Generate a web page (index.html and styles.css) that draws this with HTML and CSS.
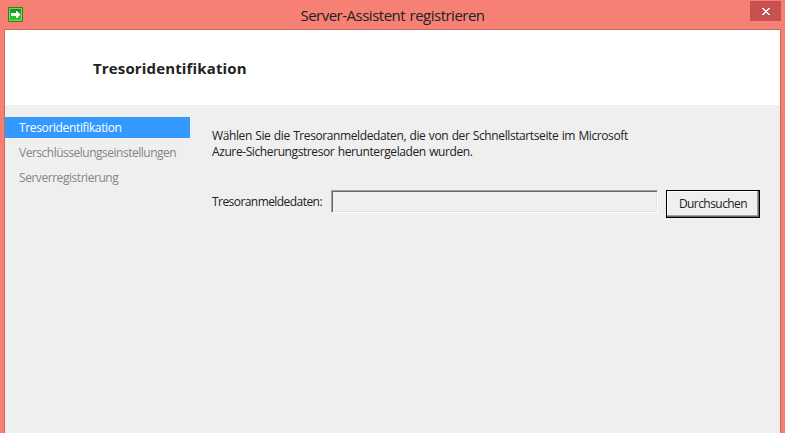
FILE: index.html
```
<!DOCTYPE html>
<html lang="de">
<head>
<meta charset="utf-8">
<title>Server-Assistent registrieren</title>
<link rel="stylesheet" href="styles.css">
</head>
<body>
<div class="window">
  <header class="titlebar">
    <svg class="app-icon" width="15" height="15" viewBox="0 0 15 15">
      <defs><linearGradient id="g" x1="0" y1="0" x2="0" y2="1"><stop offset="0" stop-color="#149014"/><stop offset="1" stop-color="#3fc832"/></linearGradient></defs>
      <rect width="15" height="15" rx="1" fill="#238a20"/>
      <rect x="1.5" y="1.5" width="12" height="12" fill="url(#g)" stroke="#7fd068"/>
      <path d="M3 6h5V4h1l3.5 3.5L9 11H8V9H3z" fill="#fff"/>
    </svg>
    <h1 class="title">Server-Assistent registrieren</h1>
    <button class="close" aria-label="Schließen">
      <svg width="8" height="7" viewBox="0 0 8 7"><path d="M0 0h2v1h1v1h2V1h1V0h2v1H7v1H6v1H5v1h1v1h1v1h1v1H6V6H5V5H3v1H2v1H0V6h1V5h1V4h1V3H2V2H1V1H0z" fill="#fff"/></svg>
    </button>
  </header>
  <div class="client">
    <div class="banner"><h2>Tresoridentifikation</h2></div>
    <div class="body">
      <nav class="steps">
        <div class="step active">Tresoridentifikation</div>
        <div class="step settings">Verschlüsselungseinstellungen</div>
        <div class="step">Serverregistrierung</div>
      </nav>
      <main class="content">
        <p class="intro">Wählen Sie die Tresoranmeldedaten, die von der Schnellstartseite im Microsoft<br>Azure-Sicherungstresor heruntergeladen wurden.</p>
        <div class="field">
          <label for="cred">Tresoranmeldedaten:</label>
          <input id="cred" type="text">
          <button class="browse">Durchsuchen</button>
        </div>
      </main>
    </div>
  </div>
</div>
</body>
</html>
```
FILE: styles.css
```
* { box-sizing: border-box; }
body { margin: 0; font: 12px/16px "Open Sans", "Noto Sans", sans-serif; color: #222; }
h1, h2, p { margin: 0; }
.window { width: 785px; height: 433px; background: #f58073; padding: 0 4px; overflow: hidden; display: flex; flex-direction: column; }
.titlebar { height: 29px; flex: none; display: flex; align-items: flex-start; }
.app-icon { margin: 7px 0 0 4px; flex: none; }
.title { flex: 1; margin-top: 5px; padding-left: 12px; text-align: center; font-size: 15px; line-height: 20px; font-weight: 400; letter-spacing: -0.5px; word-spacing: 1px; white-space: nowrap; }
.close { width: 31px; height: 20px; margin-top: 1px; border: 0; padding: 1px 0 0 1px; background: #c75050; display: flex; align-items: center; justify-content: center; }
.client { flex: 1; border: 1px solid #c9685f; border-bottom: 0; background: #efefef; }
.banner { height: 75px; background: #fff; padding: 28px 0 0 88px; }
.banner h2 { font-size: 15px; line-height: 20px; font-weight: 700; letter-spacing: 0.15px; }
.body { display: flex; }
.steps { width: 185px; flex: none; padding-top: 12px; display: flex; flex-direction: column; gap: 4px; }
.step { height: 21px; padding: 3px 0 0 14px; color: #858585; letter-spacing: -0.45px; white-space: nowrap; }
.step.active { background: #3399ff; color: #fff; letter-spacing: -0.36px; }
.step.settings { letter-spacing: -0.49px; }
.content { padding: 23px 0 0 22px; }
.intro { white-space: nowrap; letter-spacing: -0.4px; word-spacing: 0.7px; }
.field { display: flex; margin-top: 30px; }
.field label { width: 119px; padding-top: 4px; letter-spacing: -0.56px; white-space: nowrap; }
.field input { width: 327px; height: 23px; background: #efefef; border: 1px solid; border-color: #a0a0a0 #fff #fff #a0a0a0; box-shadow: inset 1px 1px #696969, inset -1px -1px #e3e3e3; border-radius: 0; outline: 0; }
.browse { width: 94px; height: 28px; margin-left: 8px; background: #efefef; border: 1px solid #000; font: inherit; letter-spacing: -0.56px; color: inherit; box-shadow: inset -1px -1px #696969, inset -2px -2px #a0a0a0, inset 1px 1px #fff; padding: 0; }
```
